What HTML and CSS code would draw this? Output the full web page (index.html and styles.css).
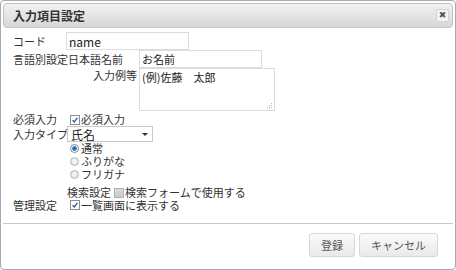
FILE: index.html
```html
<!DOCTYPE html>
<html>
<head>
    <meta charset="utf-8">
    <title>入力項目設定</title>
    <link rel="stylesheet" href="styles.css">
</head>
<body>
    <div class="dialog">
        <div class="titlebar">
            <span class="title">入力項目設定</span>
            <span class="close">&#x2716;</span>
        </div>

        <div class="content">
            <div class="row">
                <div class="label">コード</div>
                <input class="text w-code" type="text" value="name">
            </div>

            <div class="row">
                <div class="label wide">言語別設定日本語名前</div>
                <input class="text w-name" type="text" value="お名前">
            </div>

            <div class="row top">
                <div class="label wide right">入力例等</div>
                <div class="area-wrap">
                    <textarea class="area">(例)佐藤　太郎</textarea>
                    <svg class="grip" width="7" height="7" viewBox="0 0 7 7">
                        <rect x="5" y="1" width="1" height="1"/>
                        <rect x="3" y="3" width="1" height="1"/>
                        <rect x="5" y="3" width="1" height="1"/>
                        <rect x="1" y="5" width="1" height="1"/>
                        <rect x="3" y="5" width="1" height="1"/>
                        <rect x="5" y="5" width="1" height="1"/>
                    </svg>
                </div>
            </div>

            <div class="row short gap-top">
                <div class="label">必須入力</div>
                <label class="check on">
                    <span class="box"><svg viewBox="0 0 10 10"><path d="M2 5.2l2 2.2 4-5"/></svg></span>
                    必須入力
                </label>
            </div>

            <div class="row select-row">
                <div class="label">入力タイプ</div>
                <div class="select">
                    <span>氏名</span>
                    <span class="arrow"></span>
                </div>
            </div>

            <div class="radios">
                <label class="radio on"><span class="dot"></span>通常</label>
                <label class="radio"><span class="dot"></span>ふりがな</label>
                <label class="radio"><span class="dot"></span>フリガナ</label>
            </div>

            <div class="row short search-row">
                <div class="label-inline">検索設定</div>
                <label class="check off">
                    <span class="box"></span>
                    検索フォームで使用する
                </label>
            </div>

            <div class="row short admin-row">
                <div class="label">管理設定</div>
                <label class="check on">
                    <span class="box"><svg viewBox="0 0 10 10"><path d="M2 5.2l2 2.2 4-5"/></svg></span>
                    一覧画面に表示する
                </label>
            </div>
        </div>

        <div class="footer">
            <button class="btn">登録</button>
            <button class="btn">キャンセル</button>
        </div>
    </div>
</body>
</html>
```

FILE: styles.css
```css
html, body {
    margin: 0;
    padding: 0;
    background: #fff;
}

body {
    font-family: "Noto Sans CJK JP", "Liberation Sans", sans-serif;
    font-size: 11px;
    line-height: 13px;
    color: #333;
}

.dialog {
    width: 456px;
    height: 270px;
    box-sizing: border-box;
    border: 1px solid #a9a9a9;
    border-radius: 4px;
    padding: 2px;
    display: flex;
    flex-direction: column;
    background: #fff;
}

.titlebar {
    height: 25px;
    flex-shrink: 0;
    box-sizing: border-box;
    border: 1px solid #c4c4c4;
    border-radius: 4px;
    background: linear-gradient(#f2f2f2, #d6d6d6);
    display: flex;
    align-items: center;
    justify-content: space-between;
    padding: 0 3px 0 9px;
}

.title {
    font-weight: bold;
    font-size: 12px;
    color: #333;
}

.close {
    width: 13px;
    height: 13px;
    box-sizing: border-box;
    border: 1px solid #d4d4d4;
    border-radius: 2px;
    background: #f3f3f3;
    color: #555;
    font-size: 9px;
    line-height: 11px;
    text-align: center;
    font-family: "DejaVu Sans", sans-serif;
}

.content {
    flex: 1;
    padding: 4px 0 0 10px;
    border-bottom: 1px solid #c8c8c8;
}

.row {
    display: flex;
    align-items: center;
    height: 18px;
}

.row.top {
    align-items: flex-start;
    height: 43px;
}

.row.short {
    height: 13px;
}

.gap-top {
    margin-top: 2px;
}

.label {
    width: 53px;
    flex-shrink: 0;
    white-space: nowrap;
}

.label.wide {
    width: 126px;
}

.label.right {
    text-align: right;
    padding-right: 2px;
    box-sizing: border-box;
}

.row.top .label {
    padding-top: 1px;
}

.label-inline {
    margin-left: 54px;
    margin-right: 3px;
    white-space: nowrap;
}

.text,
.area {
    font-family: "Noto Sans CJK JP", "Liberation Sans", sans-serif;
    font-size: 11px;
    color: #222;
    border: 1px solid #dcdcdc;
    background: #fff;
    box-sizing: border-box;
    margin: 0;
    outline: none;
}

.text {
    height: 18px;
    padding: 0 2px;
}

.w-code {
    width: 123px;
    font-size: 12px;
}

.w-name {
    width: 123px;
}

.area-wrap {
    position: relative;
}

.area {
    display: block;
    width: 136px;
    height: 43px;
    padding: 1px 2px;
    resize: none;
    line-height: 14px;
}

.grip {
    position: absolute;
    right: 2px;
    bottom: 2px;
    fill: #b5b5b5;
}

.check,
.radio {
    display: flex;
    align-items: center;
    white-space: nowrap;
    color: #333;
}

.check .box {
    width: 10px;
    height: 10px;
    box-sizing: border-box;
    border: 1px solid #8e8f8f;
    background: #fff;
    margin: 0 1px 0 4px;
    display: flex;
}

.check.off .box {
    margin-left: 0;
    background: linear-gradient(#dcdcdc, #c8c8c8);
    border-color: #b0b0b0;
}

.check .box svg {
    width: 8px;
    height: 8px;
    fill: none;
    stroke: #2250b8;
    stroke-width: 1.6;
}

.select-row {
    height: 16px;
}

.select {
    width: 86px;
    height: 16px;
    box-sizing: border-box;
    border: 1px solid #c8c8c8;
    margin-left: 1px;
    display: flex;
    align-items: center;
    justify-content: space-between;
    padding: 0 4px 0 3px;
    font-size: 12px;
    color: #222;
}

.arrow {
    width: 0;
    height: 0;
    border-left: 3px solid transparent;
    border-right: 3px solid transparent;
    border-top: 3px solid #333;
}

.radios {
    padding: 0 0 0 57px;
    display: flex;
    flex-direction: column;
}

.radio {
    height: 13px;
}

.radio .dot {
    width: 9px;
    height: 9px;
    box-sizing: border-box;
    border-radius: 50%;
    border: 1px solid #b8b8b8;
    background: radial-gradient(#fafafa, #dcdcdc);
    margin-right: 2px;
}

.radio.on .dot {
    border-color: #8a8a8a;
    background: radial-gradient(circle, #1a63b8 0, #2a7ad0 2px, #fff 2.6px, #e6e6e6 100%);
}

.search-row {
    margin-top: 5px;
}

.row.admin-row {
    height: 12px;
}

.footer {
    height: 43px;
    flex-shrink: 0;
    box-sizing: border-box;
    padding: 9px 15px 0 0;
    display: flex;
    justify-content: flex-end;
    align-items: flex-start;
    gap: 4px;
}

.btn {
    height: 24px;
    padding: 0 11px;
    font-family: "Noto Sans CJK JP", "Liberation Sans", sans-serif;
    font-size: 11px;
    color: #555;
    border: 1px solid #d6d6d6;
    border-radius: 3px;
    background: linear-gradient(#fbfbfb, #e9e9e9);
}
```
